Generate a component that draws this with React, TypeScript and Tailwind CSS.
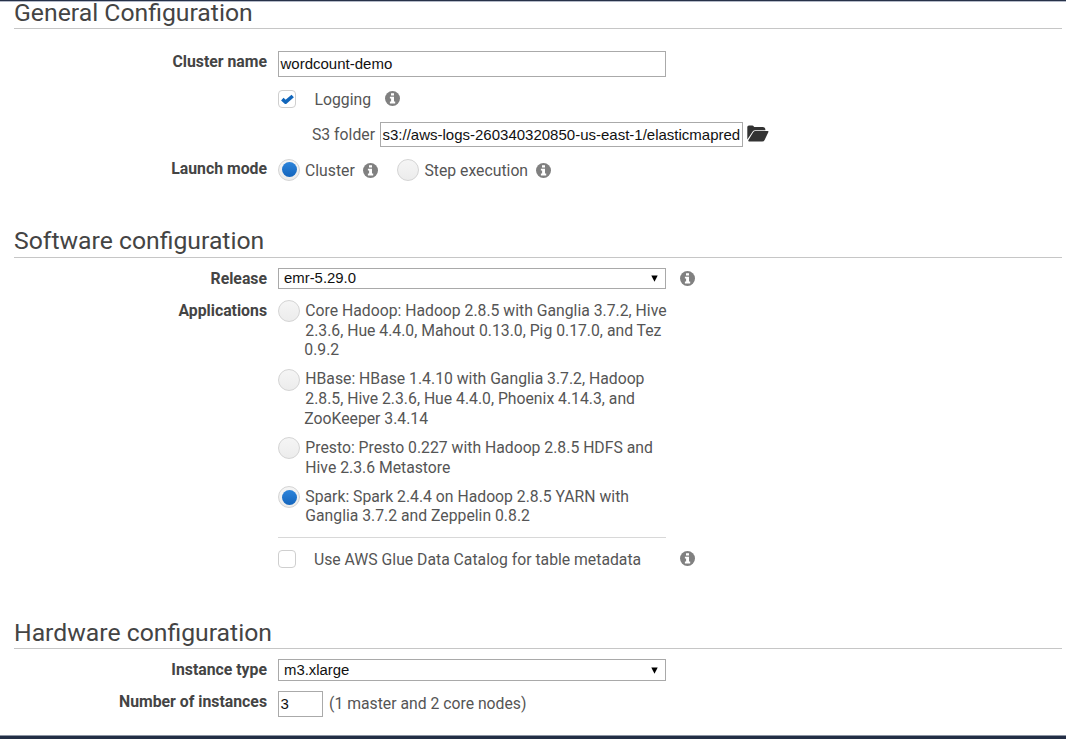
import type { ReactNode } from "react";

function Info({ className = "" }: { className?: string }) {
  return (
    <svg viewBox="0 0 15 15" className={`size-[15px] shrink-0 ${className}`}>
      <circle cx="7.5" cy="7.5" r="7.5" fill="#808080" />
      <path d="M6 2.2h3v2.3H6zM4.9 5.7H9v4.9h1.2v1.9H4.9v-1.9h1.2V7.6H4.9z" fill="#fff" />
    </svg>
  );
}

function FolderOpen({ className = "" }: { className?: string }) {
  return (
    <svg viewBox="0 0 22 17" className={`h-[17px] w-[22px] shrink-0 ${className}`}>
      <path d="M0.3 14.5V2Q0.3 0.4 1.9 0.4H5.2Q6.3 0.4 6.8 1.4L7.2 2.1H15.6Q18.4 2.1 18.4 5V5.3H8.2Q6.6 5.3 5.7 6.6Z" fill="#333" />
      <path d="M8.4 6H20.6Q22 6 21.3 7.3L17.6 14.9Q16.9 16.4 15.3 16.4H2.1Q0.7 16.4 1.5 15.1L6.2 7.3Q7 6 8.4 6Z" fill="#333" />
    </svg>
  );
}

function Heading({ children, className = "" }: { children: ReactNode; className?: string }) {
  return (
    <h2 className={`ml-[14px] mr-1 flex shrink-0 items-end border-b border-[#c6c6c6] text-[24.75px] whitespace-nowrap text-[#444] ${className}`}>
      {children}
    </h2>
  );
}

type RowProps = { label?: string; className?: string; labelClass?: string; children: ReactNode };

function Row({ label, className = "", labelClass = "", children }: RowProps) {
  return (
    <div className={`flex shrink-0 items-start ${className}`}>
      <div className={`w-[267px] shrink-0 text-right text-[15.8px] leading-5 font-bold whitespace-nowrap text-[#444] ${labelClass}`}>
        {label}
      </div>
      <div className="ml-[11px] flex h-full items-center">{children}</div>
    </div>
  );
}

function Radio({ checked = false, className = "" }: { checked?: boolean; className?: string }) {
  return (
    <span className={`flex size-[22px] shrink-0 items-center justify-center rounded-full border border-[#d4d4d4] bg-linear-to-b from-[#f5f5f5] to-[#ececec] ${className}`}>
      {checked && <span className="size-[15px] rounded-full bg-linear-to-b from-[#2d84da] to-[#1365bd]" />}
    </span>
  );
}

function Checkbox({ checked = false }: { checked?: boolean }) {
  return (
    <span className="flex size-[18px] shrink-0 items-center justify-center rounded-[4px] border border-[#cfcfcf] bg-white">
      {checked && (
        <svg viewBox="0 0 13 11" className="h-[11px] w-[13px]" fill="none" stroke="#1166bb" strokeWidth="3.6" strokeLinejoin="round">
          <path d="M1.3 5.2L4.6 8.2L11.7 2" />
        </svg>
      )}
    </span>
  );
}

function Select({ value, className = "" }: { value: string; className?: string }) {
  return (
    <div className={`flex w-[388px] items-center justify-between border border-[#a9a9a9] bg-white pr-[7px] pl-[5px] font-['Liberation_Sans',sans-serif] text-[14.9px] leading-[19px] text-[#111] ${className}`}>
      {value}
      <svg viewBox="0 0 7 7" className="size-[7px]">
        <path d="M0.3 0.5h6.4L3.5 6.8z" fill="#000" />
      </svg>
    </div>
  );
}

function Field({ value, className = "" }: { value: string; className?: string }) {
  return (
    <div className={`flex shrink-0 items-center border border-[#aaa] bg-white font-['Liberation_Sans',sans-serif] text-[15px] whitespace-nowrap text-[#111] ${className}`}>
      {value}
    </div>
  );
}

const applications = [
  {
    lines: [
      "Core Hadoop: Hadoop 2.8.5 with Ganglia 3.7.2, Hive",
      "2.3.6, Hue 4.4.0, Mahout 0.13.0, Pig 0.17.0, and Tez",
      "0.9.2",
    ],
  },
  {
    lines: [
      "HBase: HBase 1.4.10 with Ganglia 3.7.2, Hadoop",
      "2.8.5, Hive 2.3.6, Hue 4.4.0, Phoenix 4.14.3, and",
      "ZooKeeper 3.4.14",
    ],
  },
  { lines: ["Presto: Presto 0.227 with Hadoop 2.8.5 HDFS and", "Hive 2.3.6 Metastore"] },
  {
    lines: ["Spark: Spark 2.4.4 on Hadoop 2.8.5 YARN with", "Ganglia 3.7.2 and Zeppelin 0.8.2"],
    checked: true,
  },
];

export default function App() {
  return (
    <main className="flex h-[739px] w-[1066px] flex-col overflow-hidden bg-white font-[Roboto,sans-serif] text-[15.75px] leading-5 whitespace-nowrap text-[#555]">
      <div className="h-[2px] shrink-0 border-b border-[#b4bac8] bg-[#263148]" />

      <section className="flex flex-col">
        <Heading className="h-[27px] leading-[31px]">General Configuration</Heading>
        <Row label="Cluster name" className="mt-[22px] h-[26px]" labelClass="pt-px">
          <Field value="wordcount-demo" className="h-[26px] w-[388px] pl-[1.5px]" />
        </Row>
        <Row className="mt-[11px] h-[22px]">
          <Checkbox checked />
          <span className="ml-[18.5px] w-[70px] pt-px">Logging</span>
          <Info className="-mt-[2px]" />
        </Row>
        <Row className="mt-3 h-[25px]">
          <span className="ml-[34px] w-[68px]">S3 folder</span>
          <Field value="s3://aws-logs-260340320850-us-east-1/elasticmapred" className="h-[25px] w-[363px] pl-[1.5px]" />
          <FolderOpen className="-mt-[2px] ml-1" />
        </Row>
        <Row label="Launch mode" className="mt-3 h-[22px]">
          <Radio checked className="-mt-px" />
          <span className="ml-[5px] w-[58px] pt-px">Cluster</span>
          <Info />
          <Radio className="-mt-px ml-[19px]" />
          <span className="ml-[5.5px] w-[111.5px] pt-px">Step execution</span>
          <Info />
        </Row>
      </section>

      <section className="mt-[43px] flex flex-col">
        <Heading className="h-[34px] leading-[32px]">Software configuration</Heading>
        <Row label="Release" className="mt-[10px] h-[21px]" labelClass="pt-px">
          <Select value="emr-5.29.0" className="h-[21px]" />
          <Info className="ml-[14px]" />
        </Row>
        <Row label="Applications" className="mt-[11.5px]">
          <div className="flex flex-col gap-[9.5px] pt-[0.4px] leading-[19.67px]">
            {applications.map((app) => (
              <div key={app.lines[0]} className="flex items-start gap-[5.3px]">
                <Radio checked={app.checked} className="-mt-[0.5px]" />
                <div>
                  {app.lines.map((line, i) => (
                    <div key={line} className={i === 2 ? "-ml-px" : ""}>
                      {line}
                    </div>
                  ))}
                </div>
              </div>
            ))}
          </div>
        </Row>
        <div className="mt-[11.1px] ml-[278px] w-[388px] border-t border-[#d8d8d8]" />
        <Row className="mt-[11px] h-5">
          <Checkbox />
          <span className="ml-[18px] w-[366px] pt-px">Use AWS Glue Data Catalog for table metadata</span>
          <Info className="-mt-px" />
        </Row>
      </section>

      <section className="mt-[46px] flex flex-col">
        <Heading className="h-[34px] leading-[31px]">Hardware configuration</Heading>
        <Row label="Instance type" className="mt-[10px] h-[22px]" labelClass="pt-[0.5px]">
          <Select value="m3.xlarge" className="h-[22px]" />
        </Row>
        <Row label="Number of instances" className="mt-[10px] h-[26px]" labelClass="pt-px">
          <Field value="3" className="mr-[6px] h-[26px] w-[45px] pl-[1.5px]" />
          (1 master and 2 core nodes)
        </Row>
      </section>

      <div className="mt-auto h-1 shrink-0 border-t border-[#8d95a3] bg-[#232e45]" />
    </main>
  );
}
